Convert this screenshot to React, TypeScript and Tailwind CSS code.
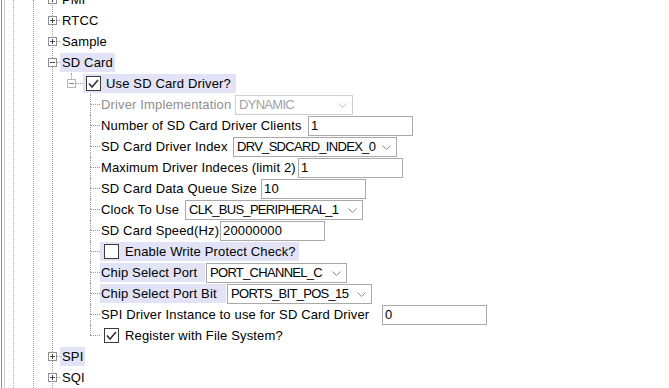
import React from "react";

const HL = "bg-[#e3e3f7]";

const Expander = ({ open, light }: { open?: boolean; light?: boolean }) => (
  <svg width="9" height="9" viewBox="0 0 9 9" className="block shrink-0">
    <rect x="0.5" y="0.5" width="8" height="8" fill="#fff" stroke={light ? "#b8b8b8" : "#8f8f8f"} />
    <path d="M2 4.5h5" stroke={light ? "#8a8a8a" : "#4a4a4a"} />
    {!open && <path d="M4.5 2v5" stroke="#4a4a4a" />}
  </svg>
);

const Check = ({ checked }: { checked?: boolean }) => (
  <svg width="15" height="15" viewBox="0 0 15 15" className="block shrink-0">
    <rect x="0.5" y="0.5" width="14" height="14" fill="#fff" stroke="#3a3a3a" />
    {checked && <path d="M3 7.5l3 3.5 6-7" fill="none" stroke="#333" strokeWidth="1.6" />}
  </svg>
);

const Chevron = ({ dim }: { dim?: boolean }) => (
  <svg width="9" height="5" viewBox="0 0 9 5" className="block shrink-0">
    <path d="M0.5 0.5l4 4 4-4" fill="none" stroke={dim ? "#c4c4c4" : "#8c8c8c"} />
  </svg>
);

// top level node (PMF, RTCC ...) sitting on the x=52 guide line
const TopNode = ({ label, open, hl }: { label: string; open?: boolean; hl?: boolean }) => (
  <div className="flex h-[21px] items-center">
    <div className="-ml-[5px]">
      <Expander open={open} />
    </div>
    <div className="w-[3px] border-t border-dotted border-[#999]" />
    <span className={`h-[19px] px-[2px] leading-[19px] ${hl ? HL : ""}`}>{label}</span>
  </div>
);

const Branch = ({ last }: { last?: boolean }) => (
  <div className="flex w-[10px] shrink-0 flex-col">
    <div className="h-[10px] border-l border-dotted border-[#999]" />
    <div className={`flex-1 border-t border-dotted border-[#999] ${last ? "" : "border-l"}`} />
  </div>
);

const TextBox = ({ value }: { value: string }) => (
  <div className="mt-[1px] h-[20px] w-[105px] border border-[#a9a9a9] bg-white pl-[2px] leading-[18px]">{value}</div>
);

const Combo = ({ value, w, disabled }: { value: string; w: string; disabled?: boolean }) => (
  <div
    className={`mt-[1px] flex h-[20px] items-center justify-between border bg-white pl-[3px] pr-[5px] ${w} ${
      disabled ? "border-[#cfcfcf] text-[#a3a3a3]" : "border-[#a9a9a9]"
    }`}
  >
    <span className="whitespace-nowrap leading-[18px] tracking-[-0.7px]">{value}</span>
    <Chevron dim={disabled} />
  </div>
);

const FieldRow = ({
  label,
  w,
  hl,
  dim,
  children,
}: {
  label: string;
  w: string;
  hl?: boolean;
  dim?: boolean;
  children: React.ReactNode;
}) => (
  <div className="flex h-[21px]">
    <Branch />
    <span
      className={`h-[19px] shrink-0 self-center whitespace-nowrap pl-[1px] leading-[19px] ${w} ${hl ? HL : ""} ${
        dim ? "text-[#8f8f8f]" : ""
      }`}
    >
      {label}
    </span>
    <div className="ml-[1px]">{children}</div>
  </div>
);

const CheckRow = ({ label, checked, hl, last }: { label: string; checked?: boolean; hl?: boolean; last?: boolean }) => (
  <div className="flex h-[21px]">
    <Branch last={last} />
    <div className={`flex h-[19px] items-center self-center pl-[4px] pr-[3px] ${hl ? HL : ""}`}>
      <Check checked={checked} />
      <span className="ml-[6px] leading-[19px]">{label}</span>
    </div>
  </div>
);

export default function App() {
  return (
    <div className="flex h-[388px] w-[669px] overflow-hidden bg-white font-['Liberation_Sans',Arial,sans-serif] text-[13px] tracking-[0.15px] text-black">
      {/* window frame */}
      <div className="ml-[1px] w-[4px] shrink-0 border-r border-l border-l-[#8e8e8e] border-r-[#d4d4d4]" />

      {/* ancestor guide lines */}
      <div className="ml-[8px] flex border-l border-dotted border-[#aaa]">
        <div className="ml-[19px] flex border-l border-dotted border-[#999]">
          <div className="-mt-[11px] ml-[18px] flex flex-col self-start border-l border-dotted border-[#999]">
            <TopNode label="PMF" />
            <TopNode label="RTCC" />
            <TopNode label="Sample" />
            <TopNode label="SD Card" open hl />

            {/* Use SD Card Driver? */}
            <div className="flex h-[21px]">
              <div className="ml-[14px] flex w-[9px] flex-col items-start">
                <div className="ml-[4px] h-[6px] border-l border-dotted border-[#999]" />
                <Expander open light />
              </div>
              <div className="w-[7px] self-center border-t border-dotted border-[#999]" />
              <div className={`flex h-[19px] items-center self-center pl-[3px] pr-[5px] ${HL}`}>
                <Check checked />
                <span className="ml-[5px] leading-[19px]">Use SD Card Driver?</span>
              </div>
            </div>

            <div className="ml-[37px] flex flex-col">
              <FieldRow label="Driver Implementation" w="w-[134px]" dim>
                <Combo value="DYNAMIC" w="w-[118px]" disabled />
              </FieldRow>
              <FieldRow label="Number of SD Card Driver Clients" w="w-[207px]">
                <TextBox value="1" />
              </FieldRow>
              <FieldRow label="SD Card Driver Index" w="w-[132px]">
                <Combo value="DRV_SDCARD_INDEX_0" w="w-[164px]" />
              </FieldRow>
              <FieldRow label="Maximum Driver Indeces (limit 2)" w="w-[197px]">
                <TextBox value="1" />
              </FieldRow>
              <FieldRow label="SD Card Data Queue Size" w="w-[160px]">
                <TextBox value="10" />
              </FieldRow>
              <FieldRow label="Clock To Use" w="w-[84px]">
                <Combo value="CLK_BUS_PERIPHERAL_1" w="w-[178px]" />
              </FieldRow>
              <FieldRow label="SD Card Speed(Hz)" w="w-[119px]">
                <TextBox value="20000000" />
              </FieldRow>
              <CheckRow label="Enable Write Protect Check?" hl />
              <FieldRow label="Chip Select Port" w="w-[105px]" hl>
                <Combo value="PORT_CHANNEL_C" w="w-[141px]" />
              </FieldRow>
              <FieldRow label="Chip Select Port Bit" w="w-[126px]" hl>
                <Combo value="PORTS_BIT_POS_15" w="w-[145px]" />
              </FieldRow>
              <FieldRow label="SPI Driver Instance to use for SD Card Driver" w="w-[281px]">
                <TextBox value="0" />
              </FieldRow>
              <CheckRow label="Register with File System?" checked last />
            </div>

            <TopNode label="SPI" hl />
            <TopNode label="SQI" />
          </div>
        </div>
      </div>
    </div>
  );
}
